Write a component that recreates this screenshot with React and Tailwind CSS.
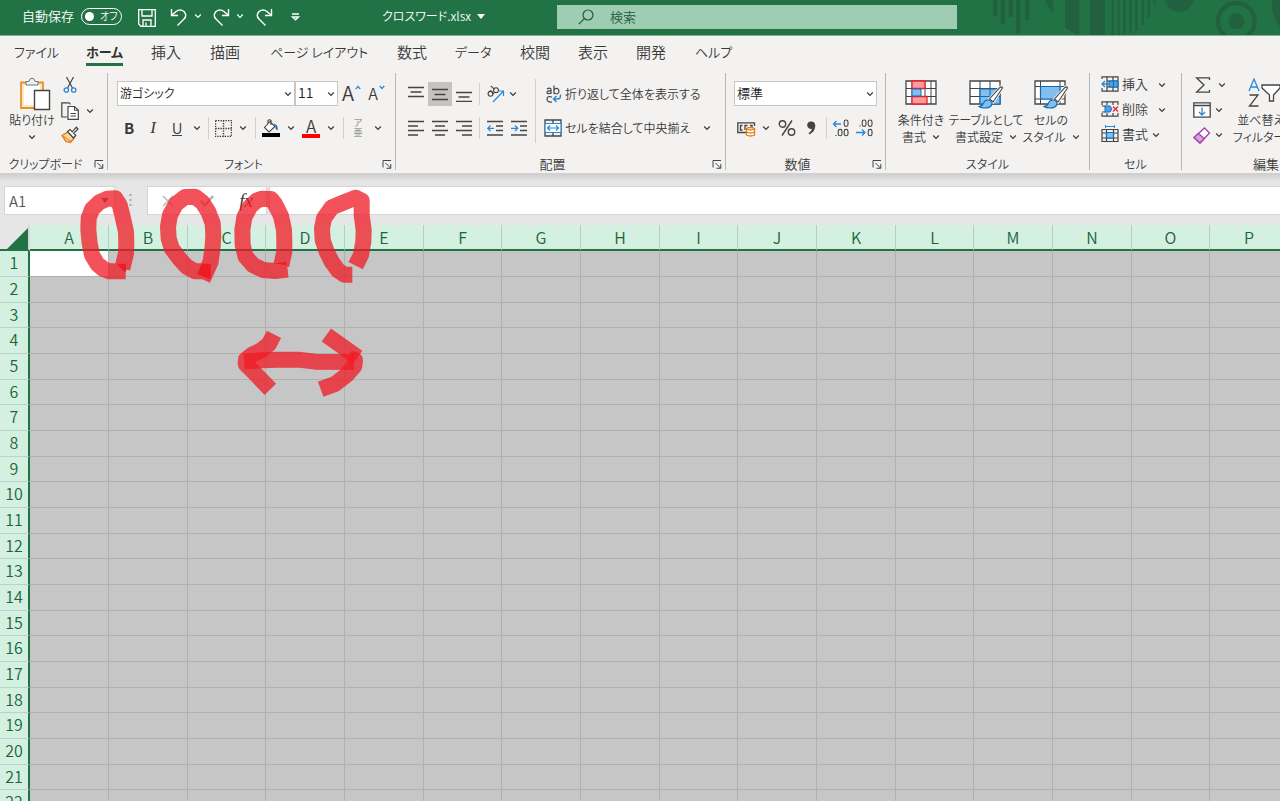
import { useState } from "react";

const TABS = [
  { name: "ファイル", className: "w-[72px] text-[13px]" },
  { name: "ホーム", className: "w-[65px] text-[13px]" },
  { name: "挿入", className: "w-[59px] text-[15px]" },
  { name: "描画", className: "w-[60px] text-[15px]" },
  { name: "ページ レイアウト", className: "w-[127px] text-[13px]" },
  { name: "数式", className: "w-[58px] text-[15px]" },
  { name: "データ", className: "w-[65px] text-[13px]" },
  { name: "校閲", className: "w-[58px] text-[15px]" },
  { name: "表示", className: "w-[58px] text-[15px]" },
  { name: "開発", className: "w-[59px] text-[15px]" },
  { name: "ヘルプ", className: "w-[60px] text-[13px]" },
];

const COLUMNS = "ABCDEFGHIJKLMNOPQRSTUVWXYZ".split("");
const ROWS = Array.from({ length: 40 }, (_, i) => i + 1);

function Icon({ w, h, children, className = "" }) {
  return (
    <svg
      width={w}
      height={h}
      viewBox={`0 0 ${w} ${h}`}
      fill="none"
      stroke="#444"
      className={`shrink-0 ${className}`}
      aria-hidden="true"
    >
      {children}
    </svg>
  );
}

function Chevron({ className = "" }) {
  return (
    <Icon w={8} h={6} className={className}>
      <path d="M1.2 1.5 4 4.3 6.8 1.5" stroke="currentColor" strokeWidth="1.2" />
    </Icon>
  );
}

function Btn({ label, className = "w-6", children }) {
  return (
    <button
      type="button"
      aria-label={label}
      className={`flex h-6 shrink-0 items-center justify-center ${className}`}
    >
      {children}
    </button>
  );
}

function Drop({ label, className = "" }) {
  return (
    <Btn label={label} className={`w-4 ${className}`}>
      <Chevron />
    </Btn>
  );
}

function Sep({ className = "h-[22px]" }) {
  return <div className={`w-px shrink-0 bg-[#d2d0ce] ${className}`} />;
}

function Group({ title, width, launcher, last, kanji, children }) {
  return (
    <>
      <section aria-label={title} className={`flex shrink-0 flex-col ${width}`}>
        <div className="flex h-[82px]">{children}</div>
        <div className="flex h-[18px] items-center">
          <span
            className={`flex-1 whitespace-nowrap text-center leading-[18px] ${kanji ? "text-[13px]" : "text-[12px]"}`}
          >
            {title}
          </span>
          {launcher && (
            <button type="button" aria-label={`${title}の設定`} className="flex w-4 justify-center">
              <Icon w={10} h={10}>
                <path d="M1 8.5V1.5H9M3.5 4 8.5 9M8.8 5V9.3H4.5" />
              </Icon>
            </button>
          )}
        </div>
      </section>
      {!last && <div className="h-[97px] w-px shrink-0 bg-[#b9b7b5]" />}
    </>
  );
}

function Select({ label, value, options, className, textClass }) {
  return (
    <div className={`relative flex h-[25px] shrink-0 ${className}`}>
      <select
        aria-label={label}
        defaultValue={value}
        className={`h-full w-full appearance-none border border-[#c8c6c4] bg-white px-[2px] pb-[2px] text-[#222] outline-none ${textClass}`}
      >
        {options.map((o) => (
          <option key={o}>{o}</option>
        ))}
      </select>
      <Chevron className="pointer-events-none absolute right-[3px] top-[10px]" />
    </div>
  );
}

function TitleBar() {
  return (
    <header className="relative flex h-9 shrink-0 items-center overflow-hidden border-b border-[#7fb093] bg-[#217346] pb-[3px] pl-[22px] text-white">
      <svg
        width="320"
        height="35"
        viewBox="0 0 960 105"
        className="absolute right-0 top-0"
        fill="#22613f"
        aria-hidden="true"
      >
        <path d="M99 0h13v48H99zM122 0h13v72h-13zM146 0h13v51h-13zM168 0h13v100h-13zM195 0h13v60h-13z" />
        <path d="M256 0h24v42Q264 22 256 0ZM315 0h43v105Q334 98 315 82ZM390 0h45v105h-45z" />
        <path d="M455 0h6v105h-6zM473 0h6v105h-6zM490 0h7v105h-7zM508 0h7v100h-7zM526 0h7v91h-7zM545 0h7v76h-7zM563 0h7v54h-7zM581 0h5v18h-5z" />
        <path d="M614 0h88Q690 36 658 36T614 0ZM935 0h25v80Q934 50 935 0Z" />
        <circle cx="829" cy="64" r="55" fill="none" stroke="#22613f" strokeWidth="13" />
        <circle cx="829" cy="64" r="24" />
      </svg>

      <label htmlFor="autosave" className="w-[59px] shrink-0 text-[13px]">
        自動保存
      </label>
      <button
        id="autosave"
        type="button"
        role="switch"
        aria-checked="false"
        className="flex h-[17px] w-[41px] shrink-0 items-center rounded-full border border-white pl-[3px]"
      >
        <span className="h-[9px] w-[9px] shrink-0 rounded-full bg-white" />
        <span className="ml-[6px] whitespace-nowrap text-[10px] leading-none">オフ</span>
      </button>
      <Btn label="保存" className="ml-[15px] mt-[3px] w-5">
        <Icon w={18} h={18}>
          <path d="M.7.7H17.3V17.3H3L.7 15ZM4 .7V7H14V.7M5 17V11H13V17M8 13.5V17" stroke="#fff" strokeWidth="1.3" />
        </Icon>
      </Btn>
      <Btn label="元に戻す" className="ml-[13px] w-[18px]">
        <Icon w={18} h={19} className="mt-[2px]">
          <path d="M1.5 1V7.5H8M1.5 7.5 6 3.5Q10 .5 14 3.5 17.5 7.5 14 11L7.5 17.5" stroke="#fff" strokeWidth="1.4" />
        </Icon>
      </Btn>
      <Drop label="元に戻す一覧" className="ml-[2px]" />
      <Btn label="やり直し" className="ml-[6px] w-[18px]">
        <Icon w={18} h={19} className="mt-[2px]">
          <path d="M16.5 1V7.5H10M16.5 7.5 12 3.5Q8 .5 4 3.5 .5 7.5 4 11L10.5 17.5" stroke="#fff" strokeWidth="1.4" />
        </Icon>
      </Btn>
      <Drop label="やり直し一覧" className="ml-[2px]" />
      <Btn label="繰り返し" className="ml-[7px] w-[18px]">
        <Icon w={18} h={19} className="mt-[2px]">
          <path d="M16.5 1V7.5H10M16.5 7.5 12 3.5Q8 .5 4 3.5 .5 7.5 4 11L10.5 17.5" stroke="#fff" strokeWidth="1.4" />
        </Icon>
      </Btn>
      <Btn label="クイック アクセスのカスタマイズ" className="ml-[14px] w-4">
        <Icon w={9} h={8} className="mt-[2px]">
          <path d="M1 1H8M1.5 4 4.5 6.8 7.5 4Z" stroke="#fff" strokeWidth="1.3" />
        </Icon>
      </Btn>

      <button type="button" className="ml-[79px] flex w-[175px] shrink-0 items-center text-[12px] leading-5">
        クロスワード.xlsx
        <svg width="8" height="5" viewBox="0 0 8 5" className="ml-[6px]" aria-hidden="true">
          <path d="M0 0H8L4 5Z" fill="#fff" />
        </svg>
      </button>

      <label className="relative mt-[1px] flex h-6 w-[400px] items-center bg-[#9fcdb3] pl-[21px] text-[#1b5e3a]">
        <Icon w={16} h={16}>
          <circle cx="10" cy="6" r="5" stroke="#1b5e3a" strokeWidth="1.2" />
          <path d="M6.3 9.7.8 15.2" stroke="#1b5e3a" strokeWidth="1.2" />
        </Icon>
        <input
          type="search"
          aria-label="検索"
          placeholder="検索"
          className="ml-4 w-full bg-transparent text-[13px] outline-none placeholder:text-[#1b5e3a] placeholder:opacity-100"
        />
      </label>
    </header>
  );
}

function RibbonTabs() {
  const [active, setActive] = useState("ホーム");

  return (
    <nav className="flex h-[34px] shrink-0 items-start pl-[14px] pt-[5px]">
      {TABS.map((tab) => (
        <button
          key={tab.name}
          type="button"
          onClick={() => setActive(tab.name)}
          className={`flex shrink-0 whitespace-nowrap leading-[22px] ${tab.className}`}
        >
          <span
            className={
              active === tab.name
                ? "border-b-[3px] border-[#217346] font-bold text-[#333]"
                : "border-b-[3px] border-transparent"
            }
          >
            {tab.name}
          </span>
        </button>
      ))}
    </nav>
  );
}

function ClipboardGroup() {
  return (
    <Group title="クリップボード" width="w-[107px]" launcher>
      <button type="button" className="ml-2 flex w-12 flex-col items-center pt-1 text-[12px] leading-[18px]">
        <Icon w={32} h={34} className="ml-[6px]">
          <path d="M2 5.5H24V31H2Z" fill="#fde7c2" stroke="#e8912d" strokeWidth="1.8" />
          <path d="M5 8H21V28H5Z" fill="#fff" stroke="none" />
          <path d="M7 8V4.5H10Q10.5 1.2 13 1.2T16 4.5H19V8Z" fill="#f3f2f1" stroke="#777" />
          <path d="M15.5 13.5H30.5V32.5H15.5Z" fill="#fff" strokeWidth="1.4" />
        </Icon>
        <span className="whitespace-nowrap">貼り付け</span>
        <Chevron className="mt-[5px]" />
      </button>
      <div className="ml-[2px] flex flex-col">
        <Btn label="切り取り" className="w-6">
          <Icon w={14} h={18}>
            <path d="M3.5 1 9.5 12M10.5 1 4.5 12" strokeWidth="1.2" />
            <circle cx="3.3" cy="14" r="2.2" stroke="#2b88d8" strokeWidth="1.3" />
            <circle cx="10.7" cy="14" r="2.2" stroke="#2b88d8" strokeWidth="1.3" />
          </Icon>
        </Btn>
        <div className="mt-[2px] flex">
          <Btn label="コピー" className="w-6">
            <Icon w={18} h={18}>
              <path d="M6 15H.8V.8H8L9.5 2.3" strokeWidth="1.2" />
              <path d="M7 4.5H13.5L17.3 8.3V17.3H7Z" fill="#fff" strokeWidth="1.2" />
              <path d="M13.5 4.5V8.3H17.3M9.5 11.5H15M9.5 14H15" />
            </Icon>
          </Btn>
          <Drop label="コピーのオプション" />
        </div>
        <Btn label="書式のコピー" className="w-6">
          <Icon w={18} h={18}>
            <path d="M1 9.5 7 6 13 12 9.5 16.5 5 15.5Z" fill="#fbd7a0" stroke="#e07b12" strokeWidth="1.4" />
            <path d="M3 10.5 10 15.5" stroke="#e07b12" />
            <path d="M6.5 5.5 9 3.5 11.3 5.8 15.3 1.2 17 3 12.7 7.2 14.8 9.5 12.5 12Z" fill="#fff" strokeWidth="1.2" />
          </Icon>
        </Btn>
      </div>
    </Group>
  );
}

function FontGroup() {
  return (
    <Group title="フォント" width="w-[287px]" launcher>
      <div className="flex flex-col pl-[9px] pt-[8px]">
        <div className="flex">
          <Select
            label="フォント名"
            value="游ゴシック"
            options={["游ゴシック", "メイリオ"]}
            className="w-[178px]"
            textClass="text-[12px]"
          />
          <Select
            label="フォント サイズ"
            value="11"
            options={["9", "10", "11", "12"]}
            className="w-[43px]"
            textClass="text-[14px]"
          />
          <Btn label="フォント サイズの拡大" className="ml-[4px] w-[19px] gap-[1px]">
            <span className="text-[20px] leading-[22px]">A</span>
            <Icon w={6} h={5} className="mb-3">
              <path d="M.7 4 3 1.5 5.3 4" stroke="#2b88d8" strokeWidth="1.2" />
            </Icon>
          </Btn>
          <Btn label="フォント サイズの縮小" className="ml-[6px] w-[19px] gap-[1px]">
            <span className="text-[16px] leading-[22px]">A</span>
            <Icon w={6} h={5} className="mb-3">
              <path d="M.7 1 3 3.5 5.3 1" stroke="#2b88d8" strokeWidth="1.2" />
            </Icon>
          </Btn>
        </div>
        <div className="mt-[10px] flex items-center">
          <Btn label="太字">
            <span className="text-[15px] font-bold leading-[22px]">B</span>
          </Btn>
          <Btn label="斜体">
            <span className="font-['Liberation_Serif',serif] text-[17px] italic leading-6">I</span>
          </Btn>
          <Btn label="下線">
            <span className="border-b border-[#444] text-[15px] leading-[15px]">U</span>
          </Btn>
          <Drop label="下線の種類" />
          <Sep className="ml-[3px] h-[22px]" />
          <Btn label="罫線" className="ml-1 w-5">
            <Icon w={17} h={17}>
              <path d="M.5.5H16.5V16.5H.5ZM8.5.5V16.5M.5 8.5H16.5" stroke="#333" strokeDasharray="1.3 1.2" strokeWidth="1.4" />
            </Icon>
          </Btn>
          <Drop label="罫線の種類" className="ml-[2px]" />
          <Sep className="ml-1 h-[22px]" />
          <Btn label="塗りつぶしの色" className="ml-[5px] w-5">
            <Icon w={18} h={18}>
              <path d="M8 2.5 2.5 8.5 7 13 13 7.5ZM6 4.5V1.5Q7.5 0 9 1.5V6" strokeWidth="1.1" fill="#fff" />
              <path d="M11.5 4.5Q16.5 5 15.5 11.5 13 10 13.5 7Z" fill="#1f6fc0" stroke="none" />
              <path d="M0 14H18V18H0Z" fill="#000" stroke="none" />
            </Icon>
          </Btn>
          <Drop label="塗りつぶしの色の一覧" className="ml-[2px]" />
          <Btn label="フォントの色" className="ml-[2px] w-5 flex-col">
            <span className="h-[15px] text-[17px] leading-[14px]">A</span>
            <span className="h-1 w-[18px] bg-[#f00]" />
          </Btn>
          <Drop label="フォントの色の一覧" className="ml-[2px]" />
          <Sep className="ml-1 h-[22px]" />
          <Btn label="ふりがな" className="ml-[5px] w-[18px] flex-col text-[#777]">
            <span className="text-[9px] leading-[10px]">ア</span>
            <span className="text-[9px] leading-[10px]">亜</span>
          </Btn>
          <Drop label="ふりがなのオプション" className="ml-[3px]" />
        </div>
      </div>
    </Group>
  );
}

function Lines({ d }) {
  return (
    <Icon w={16} h={16}>
      <path d={d} strokeWidth="1.3" />
    </Icon>
  );
}

function AlignmentGroup() {
  return (
    <Group title="配置" width="w-[329px]" launcher kanji>
      <div className="flex flex-col pl-[8px] pt-[9px]">
        <div className="flex items-center">
          <Btn label="上揃え">
            <Lines d="M0 1.5H16M2.5 6H13.5M0 10.5H16" />
          </Btn>
          <Btn label="上下中央揃え" className="w-6 bg-[#c6c4c2]">
            <Lines d="M0 3.5H16M2.5 8.5H13.5M0 13.5H16" />
          </Btn>
          <Btn label="下揃え">
            <Lines d="M0 6.5H16M2.5 11H13.5M0 15.5H16" />
          </Btn>
          <Sep className="ml-[3px] h-[22px]" />
          <Btn label="方向" className="ml-[5px] w-5">
            <Icon w={19} h={19}>
              <g strokeWidth="1.1">
                <circle cx="4.5" cy="8.8" r="2.4" />
                <path d="M4.2 5.2 8 9" />
                <circle cx="10" cy="5.2" r="2.4" />
                <path d="M4.8.8 8.4 4.4" />
              </g>
              <path d="M7 17 17.5 6M12.5 6H17.5V11" stroke="#2b88d8" strokeWidth="1.2" />
            </Icon>
          </Btn>
          <Drop label="方向の一覧" />
        </div>
        <div className="mt-[10px] flex items-center">
          <Btn label="左揃え">
            <Lines d="M0 1.5H16M0 6H10M0 10.5H16M0 15H10" />
          </Btn>
          <Btn label="中央揃え">
            <Lines d="M0 1.5H16M3 6H13M0 10.5H16M3 15H13" />
          </Btn>
          <Btn label="右揃え">
            <Lines d="M0 1.5H16M6 6H16M0 10.5H16M6 15H16" />
          </Btn>
          <Sep className="ml-[3px] h-[22px]" />
          <Btn label="インデントを減らす" className="ml-[3px] w-6">
            <Icon w={16} h={16}>
              <path d="M0 1.5H16M9 6H16M9 10.5H16M0 15H16" strokeWidth="1.3" />
              <path d="M7 8.3H1M3.5 5.5.8 8.3 3.5 11" stroke="#2b88d8" strokeWidth="1.3" />
            </Icon>
          </Btn>
          <Btn label="インデントを増やす">
            <Icon w={16} h={16}>
              <path d="M0 1.5H16M9 6H16M9 10.5H16M0 15H16" strokeWidth="1.3" />
              <path d="M0 8.3H6.5M4 5.5 6.7 8.3 4 11" stroke="#2b88d8" strokeWidth="1.3" />
            </Icon>
          </Btn>
        </div>
      </div>
      <Sep className="ml-1 mt-[6px] h-[64px]" />
      <div className="flex flex-col pl-[8px] pt-[9px] text-[12px]">
        <button type="button" className="flex h-6 items-center whitespace-nowrap">
          <Icon w={18} h={18} className="mr-[3px]">
            <g strokeWidth="1.2">
              <path d="M3 4Q5 2.5 6.5 3.5 7 4 7 5V9M7 6Q3 5.5 3 7.5T7 8" />
              <path d="M10 .5V9M10 5Q11 3.2 13 3.4 15 4 15 6.2T13 9Q11 9 10 7.5" />
              <path d="M8 12Q3 10.5 3 14T8 17" />
            </g>
            <path d="M16.5 9.5V11Q16.5 14 13.5 14H10M12.5 11 9.5 14 12.5 17" stroke="#2b88d8" strokeWidth="1.4" />
          </Icon>
          折り返して全体を表示する
        </button>
        <div className="mt-[10px] flex items-center">
          <button type="button" className="flex h-6 w-[151px] items-center whitespace-nowrap">
            <Icon w={18} h={18} className="mr-[3px]">
              <path d="M1 1H17V17H1ZM9 1V4M9 14V17" strokeWidth="1.3" />
              <path d="M1 4.5H17V13.5H1Z" fill="#fff" stroke="#2b88d8" strokeWidth="1.2" />
              <path d="M3.5 9H14.5M6 6.5 3.5 9 6 11.5M12 6.5 14.5 9 12 11.5" stroke="#2b88d8" strokeWidth="1.2" />
            </Icon>
            セルを結合して中央揃え
          </button>
          <Drop label="結合のオプション" className="ml-1" />
        </div>
      </div>
    </Group>
  );
}

function NumberGroup() {
  return (
    <Group title="数値" width="w-[159px]" launcher kanji>
      <div className="flex flex-col pl-[8px] pt-[8px]">
        <Select
          label="表示形式"
          value="標準"
          options={["標準", "数値", "通貨"]}
          className="w-[143px]"
          textClass="text-[13px]"
        />
        <div className="mt-[10px] flex items-center">
          <Btn label="通貨表示形式" className="ml-[2px] w-5">
            <Icon w={19} h={17}>
              <path d="M12 12.5H.8V2.8H17.5V6M5.5 5.5H3.5V10H5.5M10.5 5.5H8V10M13 5.5H15V7" strokeWidth="1.3" />
              <path d="M9.5 8.5V15Q13.5 17 17.5 15V8.5Q13.5 6.5 9.5 8.5ZM9.5 9Q13.5 11 17.5 9M9.5 12Q13.5 14 17.5 12" fill="#fff" stroke="#e07b12" strokeWidth="1.3" />
            </Icon>
          </Btn>
          <Drop label="通貨の一覧" className="ml-[2px]" />
          <Btn label="パーセント スタイル" className="ml-[2px] w-[22px]">
            <Icon w={18} h={18}>
              <circle cx="4.5" cy="5" r="3.2" strokeWidth="1.4" />
              <circle cx="13.5" cy="13" r="3.2" strokeWidth="1.4" />
              <path d="M14 1.5 4 16.5" strokeWidth="1.4" />
            </Icon>
          </Btn>
          <Btn label="桁区切りスタイル" className="ml-[2px] w-[22px]">
            <Icon w={9} h={14}>
              <path d="M4.2.5A3.7 3.7 0 1 0 5 7.7Q4.5 10.5 1.5 12.3L2.3 13.5Q8.5 10.5 8.3 4.5 8 .5 4.2.5Z" fill="#444" stroke="none" />
            </Icon>
          </Btn>
          <Sep className="ml-[4px] h-[22px]" />
          <Btn label="小数点以下の表示桁数を増やす" className="ml-1 w-5">
            <Icon w={18} h={18}>
              <g strokeWidth="1.1">
                <rect x="12.2" y="1" width="3.8" height="6.4" rx="1.9" />
                <rect x="6.2" y="10.4" width="3.8" height="6.4" rx="1.9" />
                <rect x="12.2" y="10.4" width="3.8" height="6.4" rx="1.9" />
                <path d="M3.4 16.5H4.6" />
              </g>
              <path d="M9 5H1.5M4.5 2 1.5 5 4.5 8" stroke="#2b88d8" strokeWidth="1.3" />
            </Icon>
          </Btn>
          <Btn label="小数点以下の表示桁数を減らす" className="ml-1 w-5">
            <Icon w={18} h={18}>
              <g strokeWidth="1.1">
                <rect x="6.2" y="1" width="3.8" height="6.4" rx="1.9" />
                <rect x="12.2" y="1" width="3.8" height="6.4" rx="1.9" />
                <rect x="12.2" y="10.4" width="3.8" height="6.4" rx="1.9" />
                <path d="M3.4 7H4.6" />
              </g>
              <path d="M0 13.5H9M6 10.5 9 13.5 6 16.5" stroke="#2b88d8" strokeWidth="1.3" />
            </Icon>
          </Btn>
        </div>
      </div>
    </Group>
  );
}

function BigButton({ icon, lines, className }) {
  return (
    <button
      type="button"
      className={`flex shrink-0 flex-col items-center pt-[5px] text-[12px] leading-[17px] ${className}`}
    >
      {icon}
      <span className="mt-[2px] whitespace-nowrap">{lines[0]}</span>
      <span className="flex items-center whitespace-nowrap">
        {lines[1]}
        <Chevron className="ml-[6px]" />
      </span>
    </button>
  );
}

function Brush() {
  return (
    <>
      <path d="M32 9.5Q34 8 34.5 10L25 24 21.5 21Z" fill="#fff" stroke="#f3f2f1" strokeWidth="3" />
      <path d="M32 9.5Q34 8 34.5 10L25 24 21.5 21Z" fill="#fff" strokeWidth="1.1" />
      <path d="M11 28.5Q14.5 28 15.5 25 17 21.5 20.5 22T24 26Q23 30 17 30 13 30 11 28.5Z" fill="#83beec" stroke="#0f6cbd" strokeWidth="1.1" />
    </>
  );
}

function StyleGroup() {
  return (
    <Group title="スタイル" width="w-[203px]">
      <BigButton
        className="ml-[3px] w-[64px]"
        lines={["条件付き", "書式"]}
        icon={
          <Icon w={32} h={31}>
            <path d="M1 3H31V26H1Z" fill="#fff" strokeWidth="1.3" />
            <path d="M7 3V26M20 3V26M26 3V26M1 10.5H31M1 18.5H31" />
            <path d="M7 3H20V10.5H7ZM7 18.5H22V26H7Z" fill="#ff9a9c" stroke="#e3242b" strokeWidth="1.3" />
            <path d="M7 11H16V18H7Z" fill="#83beec" stroke="#0f6cbd" />
          </Icon>
        }
      />
      <BigButton
        className="w-[66px]"
        lines={["テーブルとして", "書式設定"]}
        icon={
          <Icon w={36} h={31}>
            <path d="M2 3H32V26H2Z" fill="#fff" strokeWidth="1.3" />
            <path d="M12 3V26M22 3V26M2 10.5H32M2 18.5H32" />
            <path d="M12 11H32V26H12Z" fill="#83beec" stroke="#0f6cbd" strokeWidth="1.2" />
            <path d="M22 11V26M12 18.5H32" stroke="#0f6cbd" />
            <Brush />
          </Icon>
        }
      />
      <BigButton
        className="w-[64px]"
        lines={["セルの", "スタイル"]}
        icon={
          <Icon w={36} h={31}>
            <path d="M2 3H32V26H2Z" fill="#fff" strokeWidth="1.3" />
            <path d="M7.5 3V26M27 3V26M2 8.5H32M2 21H32" />
            <path d="M7.5 8.5H27V21H7.5Z" fill="#83beec" stroke="#0f6cbd" strokeWidth="1.2" />
            <Brush />
          </Icon>
        }
      />
    </Group>
  );
}

function CellRow({ text, icon, wide }) {
  return (
    <div className="flex h-[25px] text-[13px]">
      <button type="button" className="flex h-[22px] items-center">
        {icon}
        <span className="ml-[3px]">{text}</span>
      </button>
      <Drop label={`${text}のオプション`} className={wide ? "ml-[6px]" : ""} />
    </div>
  );
}

function CellsGroup() {
  return (
    <Group title="セル" width="w-[91px]">
      <div className="flex flex-col pl-[11px]">
        <CellRow
          text="挿入"
          wide
          icon={
            <Icon w={18} h={16}>
              <path d="M1 3V.8H17V15.2H1V12M6 .8V15.2M12 .8V15.2M6 5H17M6 11H17" strokeWidth="1.2" />
              <path d="M8 5H17V11H8ZM12.5 5V11" fill="#4ba0e8" stroke="#0f6cbd" />
              <path d="M9 8H1M4 5 1 8 4 11" stroke="#2b88d8" strokeWidth="1.3" />
            </Icon>
          }
        />
        <CellRow
          text="削除"
          wide
          icon={
            <Icon w={18} h={16}>
              <path d="M1 4V.8H17V4M1 12V15.2H17V12M6 .8V4M12 .8V4M6 12V15.2M12 12V15.2M1 5H5M1 11H5" strokeWidth="1.2" />
              <path d="M4 5H9L11 8 9 11H4Z" fill="#4ba0e8" stroke="#0f6cbd" />
              <path d="M12 5.5 17 10.5M17 5.5 12 10.5" stroke="#e3242b" strokeWidth="1.3" />
            </Icon>
          }
        />
        <CellRow
          text="書式"
          icon={
            <Icon w={18} h={18}>
              <path d="M1 4.5H17V16.5H1ZM5.5 4.5V16.5M12.5 4.5V16.5M1 8H17M1 13H17" strokeWidth="1.2" />
              <path d="M5.5 7.5H12.5V13H5.5Z" fill="#83beec" stroke="#0f6cbd" strokeWidth="1.2" />
              <path d="M4.5 1.5H13.5M4.5 0V3M13.5 0V3" stroke="#2b88d8" />
            </Icon>
          }
        />
      </div>
    </Group>
  );
}

function EditGroup() {
  return (
    <Group title="編集" width="w-[168px]" last kanji>
      <div className="flex flex-col pl-[11px]">
        <div className="flex h-[25px]">
          <Btn label="合計" className="w-5">
            <Icon w={16} h={16}>
              <path d="M14.5 3V.8H1.5L9 8 1.5 15.2H14.5V13" strokeWidth="1.3" />
            </Icon>
          </Btn>
          <Drop label="関数の一覧" className="ml-[1px]" />
        </div>
        <div className="flex h-[25px]">
          <Btn label="フィル" className="w-[18px]">
            <Icon w={18} h={16}>
              <path d="M.8.8H17.2V15.2H.8ZM.8 3.5H17.2" fill="#fff" strokeWidth="1.3" />
              <path d="M9 5.5V13M6 10 9 13 12 10" stroke="#2b88d8" strokeWidth="1.3" />
            </Icon>
          </Btn>
          <Drop label="フィルの一覧" />
        </div>
        <div className="flex h-[25px]">
          <Btn label="クリア" className="w-[18px]">
            <Icon w={18} h={17}>
              <path d="M11.5 1 16.5 6 7 16 1 10.5Z" fill="#fff" stroke="#a33fb0" strokeWidth="1.3" />
              <path d="M5.5 6.5 11.3 11.5 7 16 1 10.5Z" fill="#d9a0df" stroke="#a33fb0" strokeWidth="1.3" />
            </Icon>
          </Btn>
          <Drop label="クリアの一覧" />
        </div>
      </div>
      <BigButton
        className="w-[72px]"
        lines={["並べ替えと", "フィルター"]}
        icon={
          <Icon w={42} h={31} className="ml-1">
            <path d="M2 13 7 1 12 13M4 9H10" stroke="#2b88d8" strokeWidth="1.3" />
            <path d="M2.5 17H11L2.5 28H11.5" strokeWidth="1.3" />
            <path d="M15 7H33V10L26.5 17V23H22.5V17L15 10Z" fill="#fff" strokeWidth="1.3" />
          </Icon>
        }
      />
    </Group>
  );
}

function FormulaBar() {
  return (
    <div className="flex h-[51px] shrink-0 items-start bg-[#e6e6e6] bg-linear-to-b from-[#cfcfcf] to-[#e6e6e6] to-15% pl-1 pt-[12px]">
      <div className="flex h-[29px] w-[111px] shrink-0 items-center border border-[#d4d4d4] bg-white">
        <input
          aria-label="名前ボックス"
          defaultValue="A1"
          className="w-full bg-transparent pl-1 text-[15px] leading-6 text-[#555] outline-none"
        />
        <svg width="8" height="5" viewBox="0 0 8 5" className="mr-[5px] shrink-0" aria-hidden="true">
          <path d="M0 0H8L4 5Z" fill="#666" />
        </svg>
      </div>
      <Icon w={3} h={14} className="ml-[14px] mt-[7px]">
        <path d="M1.5 1V14" stroke="#aaa" strokeWidth="2" strokeDasharray="2 3" />
      </Icon>
      <div className="ml-[15px] flex h-[29px] w-[120px] shrink-0 items-center border border-[#d4d4d4] bg-white">
        <Btn label="キャンセル" className="w-10">
          <Icon w={12} h={12}>
            <path d="M1 1 11 11M11 1 1 11" stroke="#bbb" strokeWidth="1.6" />
          </Icon>
        </Btn>
        <Btn label="入力" className="w-[38px]">
          <Icon w={14} h={12}>
            <path d="M1 6 5 10.5 13 1" stroke="#aaa" strokeWidth="2" />
          </Icon>
        </Btn>
        <Btn label="関数の挿入" className="w-10">
          <span className="font-['Liberation_Serif',serif] text-[19px] italic leading-6">fx</span>
        </Btn>
      </div>
      <input
        aria-label="数式バー"
        className="ml-[2px] h-[29px] min-w-0 flex-1 border border-r-0 border-[#d4d4d4] bg-white px-2 outline-none"
      />
    </div>
  );
}

function Sheet() {
  return (
    <div className="min-h-0 flex-1 overflow-hidden bg-[#c6c6c6]">
      <table className="w-0 table-fixed border-separate border-spacing-0 text-[16px] leading-5 text-[#1c643d]">
        <colgroup>
          <col className="w-[30px]" />
          {COLUMNS.map((c, i) => (
            <col key={c} className={i % 3 === 2 ? "w-[78px]" : "w-[79px]"} />
          ))}
        </colgroup>
        <thead>
          <tr className="h-[26px]">
            <th className="border-b-2 border-r-2 border-b-[#217346] border-r-[#d9d9d9] bg-[#e6e6e6] p-0">
              <svg width="21" height="21" viewBox="0 0 21 21" className="ml-[7px] mt-[2px]" aria-hidden="true">
                <path d="M21 0V21H0Z" fill="#217346" />
              </svg>
            </th>
            {COLUMNS.map((c) => (
              <th
                key={c}
                scope="col"
                className="border-b-2 border-r border-b-[#217346] border-r-[#b4cfc1] bg-[#d3f0e0] p-0 font-[350]"
              >
                {c}
              </th>
            ))}
          </tr>
        </thead>
        <tbody>
          {ROWS.map((r) => (
            <tr key={r} className={r % 3 === 0 ? "h-[25px]" : "h-[26px]"}>
              <th
                scope="row"
                className="border-b border-r-2 border-b-[#b9d3c6] border-r-[#217346] bg-[#d3f0e0] p-0 pb-[3px] font-[350]"
              >
                {r}
              </th>
              {COLUMNS.map((c) => (
                <td
                  key={c}
                  className={`border-b border-r border-[#b0b0b0] p-0 ${r === 1 && c === "A" ? "bg-white" : ""}`}
                />
              ))}
            </tr>
          ))}
        </tbody>
      </table>
    </div>
  );
}

// Pen marks drawn over the sheet
function InkLayer() {
  return (
    <svg
      width="400"
      height="240"
      viewBox="0 0 1200 720"
      className="pointer-events-none absolute left-0 top-[170px]"
      fill="none"
      stroke="#f01c26"
      strokeOpacity="0.76"
      strokeWidth="48"
      strokeLinejoin="round"
      aria-hidden="true"
    >
      <g transform="translate(210 30)">
        <path d="M167 274H118L100 267 82 252 66 225 59 190 55 150 56 115 66 88 88 67 112 56 136 55 149 75 158 110 168 155 169 190 168 220 157 266" />
        <path d="M422 274H375L350 260 330 238 305 205 296 175 294 140 300 105 318 72 345 51 375 50 398 68 415 95 428 130 430 165 428 200 422 245 398 298" />
      </g>
      <g transform="translate(675 30)">
        <path d="M188 269 150 273 115 270 85 256 62 230 53 195 52 150 58 112 75 80 95 62 112 56 138 57 150 72 168 108 177 150 178 185 178 215 169 256" />
        <path d="M382 284H358L340 272 320 245 305 215 293 180 291 145 297 115 320 82 345 72 392 53 410 62 410 105 416 150 415 185 408 225 392 257" />
      </g>
      <g transform="translate(675 450)">
        <path d="M57 124 110 121 160 119 220 119 270 125 387 126" />
        <path d="M147 43 132 72 110 90 80 105 63 118 62 132 85 155 136 208" />
        <path d="M304 45 398 112" />
        <path d="M372 115 390 120 388 138 365 165 330 192 287 208" />
      </g>
      <g fill="#ed1c24" stroke="none">
        <path d="M350 281H378V306L370 302ZM605 281H632V328L592 312ZM822 280L858 276 860 286Z" />
      </g>
    </svg>
  );
}

export default function App() {
  return (
    <div className="relative flex h-screen flex-col overflow-hidden bg-[#f3f2f1] font-['Noto_Sans_CJK_JP',sans-serif] font-[350] text-[#3a3a3a] [font-feature-settings:'palt']">
      <TitleBar />
      <RibbonTabs />
      <div className="flex h-[104px] shrink-0 overflow-hidden border-b border-[#d0d0d0] pt-[3px]">
        <ClipboardGroup />
        <FontGroup />
        <AlignmentGroup />
        <NumberGroup />
        <StyleGroup />
        <CellsGroup />
        <EditGroup />
      </div>
      <FormulaBar />
      <Sheet />
      <InkLayer />
    </div>
  );
}
